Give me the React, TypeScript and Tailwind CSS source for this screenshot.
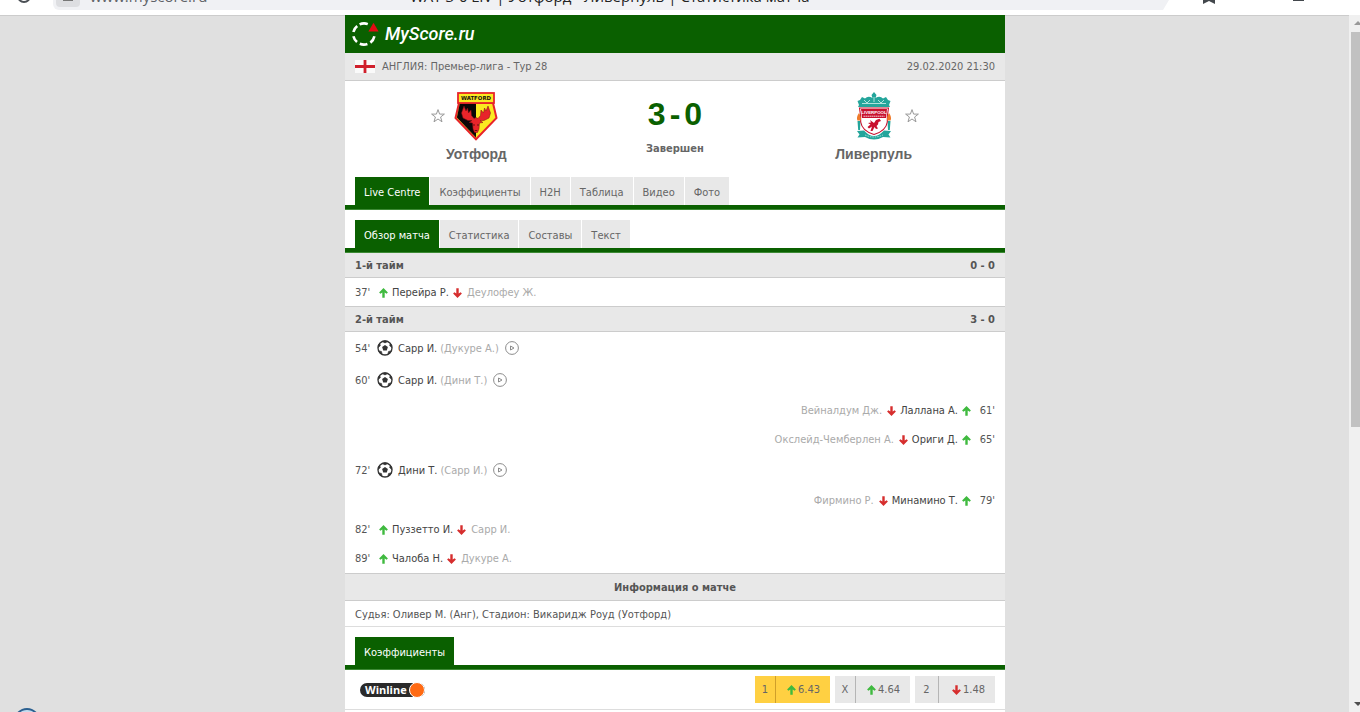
import React from "react";

interface MatchEvent {
  time: string;
  type: "goal" | "sub";
  side: "home" | "away";
  player: string;
  other: string;
}

interface Odd {
  label: string;
  value: string;
  trend: "up" | "down";
  active?: boolean;
}

const mainTabs = ["Live Centre", "Коэффициенты", "H2H", "Таблица", "Видео", "Фото"];
const subTabs = ["Обзор матча", "Статистика", "Составы", "Текст"];

const firstHalf: MatchEvent[] = [
  { time: "37'", type: "sub", side: "home", player: "Перейра Р.", other: "Деулофеу Ж." },
];

const secondHalf: MatchEvent[] = [
  { time: "54'", type: "goal", side: "home", player: "Сарр И.", other: "(Дукуре А.)" },
  { time: "60'", type: "goal", side: "home", player: "Сарр И.", other: "(Дини Т.)" },
  { time: "61'", type: "sub", side: "away", player: "Лаллана А.", other: "Вейналдум Дж." },
  { time: "65'", type: "sub", side: "away", player: "Ориги Д.", other: "Окслейд-Чемберлен А." },
  { time: "72'", type: "goal", side: "home", player: "Дини Т.", other: "(Сарр И.)" },
  { time: "79'", type: "sub", side: "away", player: "Минамино Т.", other: "Фирмино Р." },
  { time: "82'", type: "sub", side: "home", player: "Пуззетто И.", other: "Сарр И." },
  { time: "89'", type: "sub", side: "home", player: "Чалоба Н.", other: "Дукуре А." },
];

const odds: Odd[] = [
  { label: "1", value: "6.43", trend: "up", active: true },
  { label: "X", value: "4.64", trend: "up" },
  { label: "2", value: "1.48", trend: "down" },
];

const Arrow = ({ dir }: { dir: "up" | "down" }) => (
  <svg
    viewBox="0 0 9 10"
    className={dir === "up" ? "w-[9px] h-[10px] shrink-0 text-[#3fba3f]" : "w-[9px] h-[10px] shrink-0 rotate-180 text-[#d62e2e]"}
  >
    <path d="M4.5 0 L8.9 4.4 L7.6 5.8 L5.7 4.6 V9.8 H3.3 V4.6 L1.4 5.8 L0.1 4.4 Z" fill="currentColor" />
  </svg>
);

const Ball = () => (
  <svg viewBox="0 0 16 16" className="w-4 h-4 shrink-0">
    <circle cx="8" cy="8" r="7" fill="#fff" stroke="#333" strokeWidth="1.3" />
    <path d="M8 5 L10.9 7.1 L9.8 10.5 H6.2 L5.1 7.1 Z" fill="#333" />
    <path
      d="M5.2 1.4 L8 2.9 L10.8 1.4 Q8 0 5.2 1.4Z M13.3 3.2 L12.7 5.7 L15 7.6 Q15.2 5 13.3 3.2Z M14.3 11 L11.6 11.4 L10.8 14.2 Q13.3 13.3 14.3 11Z M1.7 11 L4.4 11.4 L5.2 14.2 Q2.7 13.3 1.7 11Z M2.7 3.2 L3.3 5.7 L1 7.6 Q0.8 5 2.7 3.2Z"
      fill="#333"
      stroke="#333"
      strokeWidth="0.7"
    />
  </svg>
);

const PlayIcon = () => (
  <svg viewBox="0 0 14 14" className="w-[14px] h-[14px]" fill="none" stroke="#8c8c8c">
    <circle cx="7" cy="7" r="6.4" strokeWidth="1" />
    <path d="M5.5 5 L9 7 L5.5 9 Z" strokeWidth="1" />
  </svg>
);

const BrandMark = () => (
  <svg viewBox="0 0 28 26" className="w-7 h-[26px]" fill="none">
    <g stroke="#fff" strokeWidth="2.6">
      <path d="M8.6 3.4 A10.8 10.8 0 0 1 16.8 3.1" />
      <path d="M2.4 11 A10.8 10.8 0 0 1 6.2 5" />
      <path d="M2.4 15.2 A10.8 10.8 0 0 0 6 21" />
      <path d="M8.8 22.8 A10.8 10.8 0 0 0 16.4 23" />
      <path d="M19.4 21.6 A10.8 10.8 0 0 0 23.4 15.2" />
    </g>
    <path d="M22.5 1.8 L27.6 10.4 H17.4 Z" fill="#e30b13" />
  </svg>
);

const WatfordCrest = () => (
  <svg viewBox="0 0 44 50" className="w-11 h-[50px]">
    <path d="M5 12 L1.5 27 L22 48.2 L42.5 27 L39 12 Z" fill="#fbe920" stroke="#e8242a" strokeWidth="2" />
    <path d="M5.8 12.5 L2.9 26.6 L22 46.4 V12.5 Z" fill="#0b0607" />
    <path
      d="M10 15 L12 20 L13.5 17 L14.5 22 L17 19 L17.5 24.5 L20 27.5 L22 26.5 L24 27.5 L26.5 24.5 L27 19 L29.5 22 L30.5 17 L32 20 L34 15 L36.5 22 L35 27 L30 29.5 L26 29.5 L29 31.5 L25.5 32 L25 38 L23.5 41.5 H20.5 L19 38 L18.5 32 L15 31.5 L18 29.5 L14 29.5 L9 27 L7.5 22 Z"
      fill="#e8242a"
      stroke="#7a1013"
      strokeWidth="0.5"
    />
    <path d="M20 33 v2 M24 33 v2 M20.8 39.5 h2.4" stroke="#4a0809" strokeWidth="0.8" />
    <rect x="4" y="2" width="36" height="10" fill="#fbe920" stroke="#e8242a" strokeWidth="1.8" />
    <text x="22" y="9" fontSize="5.4" fontWeight="700" textAnchor="middle" fill="#161010" className="font-['DejaVu_Sans']">
      WATFORD
    </text>
  </svg>
);

const LiverpoolCrest = () => (
  <svg viewBox="0 0 44 50" className="w-11 h-[50px]">
    <g fill="#24a59b">
      <path d="M22 1 L24.5 4 L23.5 7 Q28 4.5 31 7.5 L34 6 L36 9 L38.5 10 L37 14 L38 16 H6 L7 14 L5.5 10 L8 9 L10 6 L13 7.5 Q16 4.5 20.5 7 L19.5 4 Z" />
      <path d="M5 40 L12 39.5 Q17 45 22 45 Q27 45 32 39.5 L39 40 L36.5 43.5 L38.5 46.5 L31 46 Q22 51 13 46 L5.5 46.5 L7.5 43.5 Z" />
      <path d="M5.5 30 H8.5 L8 39 H6.2 Z M35.5 30 H38.5 L37.8 39 H36 Z" />
    </g>
    <path d="M10 12.5 H34 M12 9 L15 12 L18 9 M26 9 L29 12 L32 9 M22 6 V11" stroke="#d4f1ee" strokeWidth="0.8" fill="none" />
    <path d="M7.5 17 H36.5 Q35 25 35.3 31 Q34 40 22 43.5 Q10 40 8.7 31 Q9 25 7.5 17 Z" fill="#fff" stroke="#c8102e" strokeWidth="1.1" />
    <path d="M9 18 H35 L34 27 H10 Z" fill="#c8102e" />
    <text x="22" y="23.4" fontSize="4.4" fontWeight="700" textAnchor="middle" fill="#fff" className="font-['Liberation_Sans']">
      LIVERPOOL
    </text>
    <path d="M11.5 25.2 H32.5" stroke="#fff" strokeWidth="0.9" strokeDasharray="1.4 0.6" />
    <path
      d="M24 29 L27.5 27.8 L29 30 L26.5 31 L26 33.5 L24.5 35 L26 37.5 L24 38 L22.5 36 L20.5 40 H18.5 L20 35.5 L17 37.5 L15.5 36 L18.5 33.5 L16 32 L19 31.4 L18 29 L22 32 Z"
      fill="#c8102e"
    />
    <path
      d="M7 22 Q9.6 26 8.6 29.6 H5.4 Q4 26 7 22Z M37 22 Q34.4 26 35.4 29.6 H38.6 Q40 26 37 22Z"
      fill="#ef7a2a"
    />
    <path d="M13 44 Q22 48 31 44" stroke="#c9efeb" strokeWidth="0.8" strokeDasharray="1.5 1" fill="none" />
  </svg>
);

const FavouriteButton = ({ team }: { team: string }) => (
  <button aria-label={team} className="flex items-center justify-center">
    <svg viewBox="0 0 16 16" className="w-4 h-4" fill="none" stroke="#999" strokeWidth="1">
      <path d="M8 1.6 L9.6 6.1 H14.4 L10.6 9 L12 13.8 L8 11 L4 13.8 L5.4 9 L1.6 6.1 H6.4 Z" />
    </svg>
  </button>
);

const TeamName = ({ children }: { children: string }) => (
  <h2 className="mt-[3px] font-['Liberation_Sans',sans-serif] text-[14px] leading-5 font-bold text-[#666]">{children}</h2>
);

const Tabs = ({ items }: { items: string[] }) => (
  <div className="border-b border-[#3d8a35]">
    <nav className="border-b-4 border-[#0a6000] px-[10px] flex gap-px">
      {items.map((item, i) => (
        <a
          key={item}
          href="#"
          className={
            i === 0
              ? "h-7 px-[9px] leading-8 bg-[#0a6000] text-white"
              : "h-7 px-[9px] leading-8 bg-[#e8e8e8] text-[#666]"
          }
        >
          {item}
        </a>
      ))}
    </nav>
  </div>
);

const HalfHeader = ({ title, score, divided }: { title: string; score: string; divided?: boolean }) => (
  <div
    className={
      divided
        ? "flex justify-between -mt-px h-[26px] px-[10px] leading-[26px] font-bold bg-[#e8e8e8] border-y border-[#ccc]"
        : "flex justify-between h-[25px] px-[10px] leading-[26px] font-bold bg-[#e8e8e8] border-b border-[#ccc]"
    }
  >
    <span>{title}</span>
    <span>{score}</span>
  </div>
);

const EventRow = ({ event }: { event: MatchEvent }) => {
  const away = event.side === "away";

  if (event.type === "goal") {
    return (
      <li className="flex items-center h-8 px-[10px]">
        <span className="w-[22px] pt-0.5">{event.time}</span>
        <Ball />
        <a href="#" className="ml-[5px] pt-0.5 text-[#444]">{event.player}</a>
        <span className="ml-[3px] pt-0.5 text-[#aaa]">{event.other}</span>
        <button aria-label={event.time} className="ml-[6px]">
          <PlayIcon />
        </button>
      </li>
    );
  }

  return (
    <li className={away ? "flex flex-row-reverse items-center h-[29px] px-[10px]" : "flex items-center h-[29px] px-[10px]"}>
      <span className={away ? "w-6 pt-0.5 text-right" : "w-6 pt-0.5"}>{event.time}</span>
      <Arrow dir="up" />
      <a href="#" className="mx-1 pt-0.5 text-[#444]">{event.player}</a>
      <Arrow dir="down" />
      <a href="#" className="mx-[5px] pt-0.5 text-[#aaa]">{event.other}</a>
    </li>
  );
};

const BrowserBar = () => (
  <header className="h-[15px] bg-white overflow-hidden flex items-start text-[#5f6368] font-['Open_Sans',sans-serif] text-[15px] leading-5">
    <svg viewBox="0 0 14 14" className="w-[14px] h-[14px] ml-[17px] -mt-[11px]" fill="none" stroke="#4a4f54" strokeWidth="2">
      <circle cx="7" cy="7" r="6" />
    </svg>
    <div className="h-[10px] ml-[22px] mr-[197px] grow bg-[#f0f1f4] rounded-bl-md flex items-start relative">
      <span className="w-6 h-[7px] ml-[3px] bg-[#dddee1] rounded-b flex justify-center">
        <span className="w-[10px] h-px bg-[#777]" />
      </span>
      <span className="ml-[10px] -mt-[14px]">www.myscore.ru</span>
      <span className="absolute left-[357px] -top-[14px] text-[#222] whitespace-nowrap">
        WAT 3-0 LIV | Уотфорд - Ливерпуль | Статистика матча
      </span>
      <svg viewBox="0 0 6 10" className="absolute left-full top-0 w-[6px] h-[10px]">
        <path d="M0 0 H6 L0 10 Z" fill="#f0f1f4" />
      </svg>
      <svg viewBox="0 0 12 4" className="absolute -right-[52px] top-0 w-3 h-1">
        <path d="M0 0 H12 V4 L6 1 L0 4 Z" fill="#43484d" />
      </svg>
      <span className="absolute -right-[141px] top-0 w-[11px] h-px bg-[#43484d]" />
    </div>
  </header>
);

const Scrollbar = () => (
  <aside className="w-[11px] shrink-0 bg-[#f0f0f0] flex flex-col items-end">
    <svg viewBox="0 0 8 16" className="w-2 h-4 mb-px" fill="#999">
      <path d="M2 10 L6 6 L8 8 V10 Z" />
    </svg>
    <div className="w-[9px] h-[56.7%] bg-[#c1c1c1]" />
    <svg viewBox="0 0 8 16" className="w-2 h-4 mt-auto" fill="#505050">
      <path d="M2 6 L6 10 L8 8 V6 Z" />
    </svg>
  </aside>
);

const App: React.FC = () => {
  return (
    <div className="h-screen overflow-hidden flex flex-col bg-[#e0e0e0] text-[#555] text-[11px] font-['DejaVu_Sans_Condensed','DejaVu_Sans',sans-serif]">
      <BrowserBar />
      <div className="grow min-h-0 flex">
        <div className="grow pl-px flex flex-col items-center border-t border-[#ccc]">
          <main className="-mt-px w-full max-w-[660px] grow bg-white">
            <div className="h-[38px] bg-[#0a6000] flex items-center pl-[6px]">
              <a href="#" className="flex items-center text-white">
                <BrandMark />
                <span className="ml-[6px] font-['Roboto',sans-serif] italic font-medium text-[18px] leading-6">MyScore.ru</span>
              </a>
            </div>

            <div className="h-7 px-[10px] flex items-center bg-[#e8e8e8] border-b border-[#ccc] text-[#666]">
              <svg viewBox="0 0 20 13" className="w-5 h-[13px]">
                <rect width="20" height="13" fill="#fafafa" />
                <path d="M10 0 V13 M0 6.5 H20" stroke="#d0202c" strokeWidth="2.8" />
              </svg>
              <a href="#" className="ml-[7px] pt-0.5">АНГЛИЯ: Премьер-лига - Тур 28</a>
              <span className="ml-auto pt-0.5">29.02.2020 21:30</span>
            </div>

            <section className="h-24 px-8 pt-[10px] grid grid-cols-3 text-center">
              <div className="flex flex-col items-center">
                <div className="grid grid-cols-[18px_44px_18px] gap-[7px]">
                  <FavouriteButton team="Уотфорд" />
                  <WatfordCrest />
                </div>
                <TeamName>Уотфорд</TeamName>
              </div>
              <div>
                <p className="mt-[3px] flex justify-center gap-1 font-['Liberation_Sans',sans-serif] text-[32px] leading-10 font-bold text-[#0a6000]">
                  <span>3</span>
                  <span>-</span>
                  <span>0</span>
                </p>
                <p className="mt-[7px] leading-4 font-bold text-[#666]">Завершен</p>
              </div>
              <div className="flex flex-col items-center">
                <div className="grid grid-cols-[18px_44px_18px] gap-[7px]">
                  <span />
                  <LiverpoolCrest />
                  <FavouriteButton team="Ливерпуль" />
                </div>
                <TeamName>Ливерпуль</TeamName>
              </div>
            </section>

            <Tabs items={mainTabs} />
            <div className="mt-[10px]">
              <Tabs items={subTabs} />
            </div>

            <HalfHeader title="1-й тайм" score="0 - 0" />
            <ul>
              {firstHalf.map((e) => (
                <EventRow key={e.time} event={e} />
              ))}
            </ul>
            <HalfHeader title="2-й тайм" score="3 - 0" divided />
            <ul>
              {secondHalf.map((e) => (
                <EventRow key={e.time} event={e} />
              ))}
            </ul>

            <h3 className="h-7 leading-7 text-center font-bold bg-[#e8e8e8] border-y border-[#ccc]">Информация о матче</h3>
            <p className="h-[26px] px-[10px] leading-7 border-b border-[#ddd]">
              Судья: Оливер М. (Анг), Стадион: Викаридж Роуд (Уотфорд)
            </p>

            <div className="mt-[10px]">
              <Tabs items={["Коэффициенты"]} />
            </div>
            <div className="h-10 pl-[15px] pr-[10px] flex items-center border-b border-[#ddd]">
              <a href="#" className="flex items-center h-[14px] pl-[5px] rounded-full bg-[#2a2a2a] text-white font-['Open_Sans',sans-serif] font-bold text-[11px] leading-[14px]">
                Winline
                <span className="ml-[2px] w-4 h-4 rounded-full bg-[#ff6a13] border border-white" />
              </a>
              <div className="ml-auto flex gap-[5px] text-[#666]">
                {odds.map((odd) => (
                  <button
                    key={odd.label}
                    className={
                      odd.active
                        ? "group flex items-center h-[27px] w-[75px] leading-7 bg-[#ffd042]"
                        : "group flex items-center h-[27px] w-[75px] last:w-20 leading-7 bg-[#e8e8e8]"
                    }
                  >
                    <span
                      className={
                        odd.active
                          ? "w-[21px] h-full border-r border-[#cf9f2a]"
                          : "w-[21px] group-last:w-6 h-full border-r border-[#b5b5b5]"
                      }
                    >
                      {odd.label}
                    </span>
                    <span className="grow pr-[10px] flex items-center justify-end gap-[2px]">
                      <Arrow dir={odd.trend} />
                      <span>{odd.value}</span>
                    </span>
                  </button>
                ))}
              </div>
            </div>
          </main>
        </div>
        <Scrollbar />
      </div>
      {/* floating widget peeking in from the bottom edge */}
      <div className="fixed left-[14px] top-[708px] w-[26px] h-[26px] rounded-full border-2 border-[#2b6090] bg-[#c5dcef]" />
    </div>
  );
};

export default App;
